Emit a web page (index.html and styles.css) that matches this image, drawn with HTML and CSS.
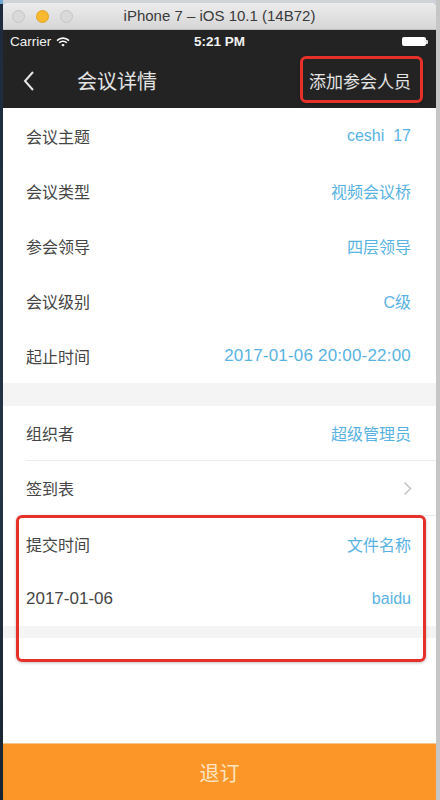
FILE: index.html
```html
<!DOCTYPE html>
<html lang="zh">
<head>
<meta charset="utf-8">
<link rel="stylesheet" href="styles.css">
</head>
<body>
<div class="screen">
  <div class="desk-left"></div>
  <div class="window">
    <div class="titlebar">
      <div class="lights">
        <span class="light gray"></span>
        <span class="light yellow"></span>
        <span class="light gray"></span>
      </div>
      <div class="title">iPhone 7 – iOS 10.1 (14B72)</div>
    </div>
    <div class="phone">
      <div class="statusbar">
        <div class="carrier">Carrier
          <svg class="wifi" width="14" height="10" viewBox="0 0 14 10">
            <path d="M1 3.6 A8.5 8.5 0 0 1 13 3.6" fill="none" stroke="#fff" stroke-width="1.6"/>
            <path d="M3.2 5.8 A5.3 5.3 0 0 1 10.8 5.8" fill="none" stroke="#fff" stroke-width="1.6"/>
            <path d="M5.3 7.9 L7 9.6 L8.7 7.9 A2.4 2.4 0 0 0 5.3 7.9 Z" fill="#fff"/>
          </svg>
        </div>
        <div class="time">5:21 PM</div>
        <div class="battery"><span class="batt-body"></span><span class="batt-nub"></span></div>
      </div>
      <div class="navbar">
        <svg class="back" width="12" height="22" viewBox="0 0 12 22">
          <path d="M10 2 L2 11 L10 20" fill="none" stroke="#e6e6e6" stroke-width="2"/>
        </svg>
        <div class="navtitle">会议详情</div>
        <div class="navaction">添加参会人员
          <span class="mark mark-top"></span>
        </div>
      </div>
      <div class="content">
        <div class="group">
          <div class="row"><span class="label">会议主题</span><span class="value">ceshi&nbsp; 17</span></div>
          <div class="row"><span class="label">会议类型</span><span class="value">视频会议桥</span></div>
          <div class="row"><span class="label">参会领导</span><span class="value">四层领导</span></div>
          <div class="row"><span class="label">会议级别</span><span class="value">C级</span></div>
          <div class="row"><span class="label">起止时间</span><span class="value num wide">2017-01-06 20:00-22:00</span></div>
        </div>
        <div class="gap"></div>
        <div class="group second">
          <div class="row line"><span class="label">组织者</span><span class="value">超级管理员</span></div>
          <div class="row line"><span class="label">签到表</span>
            <svg class="chev" width="9" height="15" viewBox="0 0 9 15"><path d="M1.5 1.5 L7.5 7.5 L1.5 13.5" fill="none" stroke="#c4c4c8" stroke-width="1.5"/></svg>
          </div>
          <div class="row"><span class="label">提交时间</span><span class="value">文件名称</span></div>
          <div class="row"><span class="label num">2017-01-06</span><span class="value">baidu</span></div>
          <div class="band"></div>
          <span class="mark mark-files"></span>
        </div>
        <div class="filler"></div>
      </div>
      <div class="bottom">退订</div>
    </div>
  </div>
  <div class="desk-right"></div>
</div>
</body>
</html>
```
FILE: styles.css
```css
html, body {
  margin: 0;
  padding: 0;
  width: 440px;
  height: 800px;
  overflow: hidden;
  background: #cfd3d8;
  font-family: "Liberation Sans", "Noto Sans CJK SC", sans-serif;
}
.screen {
  display: flex;
  width: 440px;
  height: 800px;
}
.desk-left {
  width: 3px;
  background: linear-gradient(#6fa7cf 0 4px, #1d2b3c 4px, #243447 60%, #1a2430);
}
.desk-right {
  width: 4px;
  background: #c6c6c6;
}
.window {
  flex: 1;
  display: flex;
  flex-direction: column;
  margin-top: 3px;
  border-radius: 5px 5px 0 0;
  overflow: hidden;
  background: #fff;
}
.titlebar {
  height: 26px;
  flex: none;
  display: flex;
  align-items: center;
  position: relative;
  background: linear-gradient(#ececec, #d6d6d6);
  border-bottom: 1px solid #bdbdbd;
}
.lights {
  display: flex;
  gap: 11px;
  padding-left: 9px;
}
.light {
  width: 13px;
  height: 13px;
  border-radius: 50%;
  box-sizing: border-box;
}
.light.gray {
  background: #d9d9d9;
  border: 1px solid #c6c6c6;
}
.light.yellow {
  background: #f7b92f;
  border: 1px solid #e2a521;
}
.title {
  position: absolute;
  left: 0;
  right: 0;
  top: 4px;
  text-align: center;
  font-family: "Liberation Sans", sans-serif;
  font-size: 15px;
  color: #3a3a3a;
}
.phone {
  flex: 1;
  display: flex;
  flex-direction: column;
}
.statusbar {
  height: 23px;
  flex: none;
  background: #232323;
  display: flex;
  align-items: center;
  justify-content: space-between;
  padding: 0 8px 0 7px;
  color: #f2f2f2;
  font-family: "Liberation Sans", sans-serif;
  font-size: 13.5px;
  position: relative;
}
.carrier {
  display: flex;
  align-items: center;
  gap: 5px;
  width: 100px;
}
.time {
  position: absolute;
  left: 0;
  right: 0;
  text-align: center;
  font-weight: bold;
  font-size: 13.5px;
}
.battery {
  display: flex;
  align-items: center;
}
.batt-body {
  width: 24px;
  height: 9px;
  background: #fff;
  border-radius: 2px;
}
.batt-nub {
  width: 2px;
  height: 4px;
  background: #ddd;
  border-radius: 0 1px 1px 0;
}
.navbar {
  height: 55px;
  flex: none;
  background: #232323;
  display: flex;
  align-items: center;
  padding: 0 25px 0 20px;
}
.back {
  flex: none;
}
.navtitle {
  margin-left: 42px;
  font-size: 20px;
  color: #e4e4e4;
  flex: 1;
}
.navaction {
  font-size: 17px;
  color: #e4e4e4;
  position: relative;
}
.mark {
  position: absolute;
  border: 3px solid #e5312a;
  border-radius: 6px;
  box-shadow: 0 1px 3px rgba(0,0,0,0.25);
  pointer-events: none;
}
.mark-top {
  left: -9px;
  right: -12px;
  top: -12px;
  bottom: -10px;
}
.content {
  flex: 1;
  display: flex;
  flex-direction: column;
}
.group {
  display: flex;
  flex-direction: column;
  padding-left: 23px;
  background: #fff;
}
.second {
  position: relative;
}
.row {
  height: 55px;
  box-sizing: border-box;
  display: flex;
  align-items: center;
  justify-content: space-between;
  padding-right: 25px;
}
.row.line {
  border-bottom: 1px solid #ececec;
}
.label {
  font-size: 16px;
  color: #454545;
}
.value {
  font-size: 16px;
  color: #59b3e2;
}
.num {
  font-size: 17px;
}
.num.wide {
  letter-spacing: 0.2px;
}
.chev {
  margin-right: -1px;
}
.gap {
  height: 23px;
  background: #f4f4f4;
}
.band {
  height: 12px;
  background: #f4f4f4;
  margin-left: -23px;
}
.mark-files {
  left: 13px;
  right: 10px;
  top: 109px;
  bottom: -24px;
}
.filler {
  flex: 1;
  background: #fff;
}
.bottom {
  height: 56px;
  flex: none;
  background: #fd9628;
  color: #fde4c2;
  font-size: 20px;
  display: flex;
  align-items: center;
  justify-content: center;
  border-top: 1px solid #f4c58f;
}
```
